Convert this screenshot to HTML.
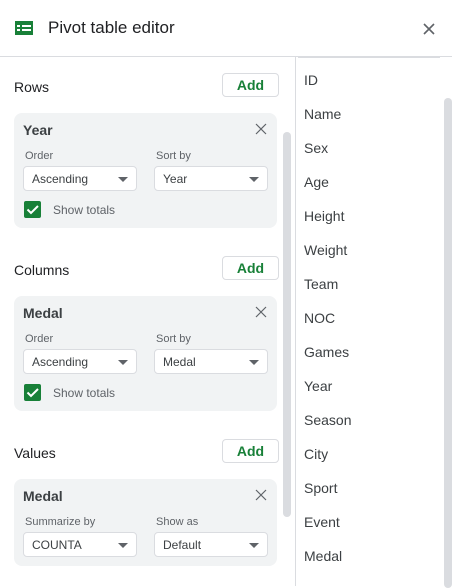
<!DOCTYPE html>
<html><head><style>
*{margin:0;padding:0;box-sizing:border-box}
body{width:452px;height:586px;overflow:hidden;background:#fff;font-family:"Liberation Sans",Arial,sans-serif;color:#202124;position:relative}
.a{position:absolute}
.hdr{left:48px;top:18px;font-size:17px;color:#202124}
.sec{left:14px;font-size:14px;color:#202124}
.add{left:222px;width:57px;height:24px;border:1px solid #dadce0;border-radius:4px;color:#188038;font-size:14px;font-weight:bold;text-align:center;line-height:22px}
.card{left:14px;width:263px;height:115px;background:#f1f3f4;border-radius:8px}
.card .t{position:absolute;left:9px;top:9px;font-size:14px;font-weight:bold;color:#3c4043}
.card .x{position:absolute;left:241px;top:10px}
.card .l{position:absolute;top:37px;font-size:11px;color:#5f6368}
.sel{position:absolute;top:53px;width:114px;height:25px;background:#fff;border:1px solid #dadce0;border-radius:4px;font-size:12px;color:#3c4043;padding-left:8px;line-height:25px}
.sel:after{content:"";position:absolute;right:8px;top:10px;border:5px solid transparent;border-top:5px solid #5f6368;border-bottom:0}
.cb{position:absolute;left:10px;top:88px;width:17px;height:17px;background:#188038;border-radius:2px}
.st{position:absolute;left:39px;top:90px;font-size:12px;color:#5f6368}
.it{left:304px;font-size:14px;color:#3c4043}
</style></head><body>
<svg class="a" style="left:15px;top:21px" width="18" height="14" viewBox="0 0 18 14"><rect width="18" height="14" fill="#188038"/><rect x="2" y="4" width="3" height="2" fill="#fff"/><rect x="7" y="4" width="9" height="2" fill="#fff"/><rect x="2" y="8" width="3" height="2" fill="#fff"/><rect x="7" y="8" width="9" height="2" fill="#fff"/></svg>
<div class="a hdr">Pivot table editor</div>
<svg class="a" style="left:423px;top:23px" width="12" height="12" viewBox="0 0 12 12"><path d="M1 1L11 11M11 1L1 11" stroke="#5f6368" stroke-width="1.6"/></svg>
<div class="a" style="left:0;top:56px;width:452px;height:1px;background:#dadce0"></div>
<div class="a" style="left:295px;top:57px;width:1px;height:529px;background:#dadce0"></div>
<div class="a" style="left:298px;top:56px;width:142px;height:2px;background:#dadce0"></div>
<div class="a" style="left:283px;top:132px;width:8px;height:385px;background:#dadce0;border-radius:4px"></div>
<div class="a" style="left:444px;top:98px;width:8px;height:490px;background:#dadce0;border-radius:4px"></div>

<div class="a sec" style="top:79px">Rows</div>
<div class="a add" style="top:73px">Add</div>
<div class="a card" style="top:113px">
<div class="t">Year</div>
<svg class="x" width="12" height="12" viewBox="0 0 12 12"><path d="M1 1L11 11M11 1L1 11" stroke="#5f6368" stroke-width="1.2"/></svg>
<div class="l" style="left:11px">Order</div><div class="l" style="left:142px">Sort by</div>
<div class="sel" style="left:9px">Ascending</div><div class="sel" style="left:140px">Year</div>
<div class="cb"><svg width="17" height="17" viewBox="0 0 17 17"><path d="M3.5 8.5l3.5 3.5 7-7" stroke="#fff" stroke-width="2" fill="none"/></svg></div>
<div class="st">Show totals</div>
</div>

<div class="a sec" style="top:262px">Columns</div>
<div class="a add" style="top:256px">Add</div>
<div class="a card" style="top:296px">
<div class="t">Medal</div>
<svg class="x" width="12" height="12" viewBox="0 0 12 12"><path d="M1 1L11 11M11 1L1 11" stroke="#5f6368" stroke-width="1.2"/></svg>
<div class="l" style="left:11px">Order</div><div class="l" style="left:142px">Sort by</div>
<div class="sel" style="left:9px">Ascending</div><div class="sel" style="left:140px">Medal</div>
<div class="cb"><svg width="17" height="17" viewBox="0 0 17 17"><path d="M3.5 8.5l3.5 3.5 7-7" stroke="#fff" stroke-width="2" fill="none"/></svg></div>
<div class="st">Show totals</div>
</div>

<div class="a sec" style="top:445px">Values</div>
<div class="a add" style="top:439px">Add</div>
<div class="a card" style="top:479px;height:87px">
<div class="t">Medal</div>
<svg class="x" width="12" height="12" viewBox="0 0 12 12"><path d="M1 1L11 11M11 1L1 11" stroke="#5f6368" stroke-width="1.2"/></svg>
<div class="l" style="left:11px">Summarize by</div><div class="l" style="left:142px">Show as</div>
<div class="sel" style="left:9px">COUNTA</div><div class="sel" style="left:140px">Default</div>
</div>

<div class="a it" style="top:72px">ID</div>
<div class="a it" style="top:106px">Name</div>
<div class="a it" style="top:140px">Sex</div>
<div class="a it" style="top:174px">Age</div>
<div class="a it" style="top:208px">Height</div>
<div class="a it" style="top:242px">Weight</div>
<div class="a it" style="top:276px">Team</div>
<div class="a it" style="top:310px">NOC</div>
<div class="a it" style="top:344px">Games</div>
<div class="a it" style="top:378px">Year</div>
<div class="a it" style="top:412px">Season</div>
<div class="a it" style="top:446px">City</div>
<div class="a it" style="top:480px">Sport</div>
<div class="a it" style="top:514px">Event</div>
<div class="a it" style="top:548px">Medal</div>
</body></html>
